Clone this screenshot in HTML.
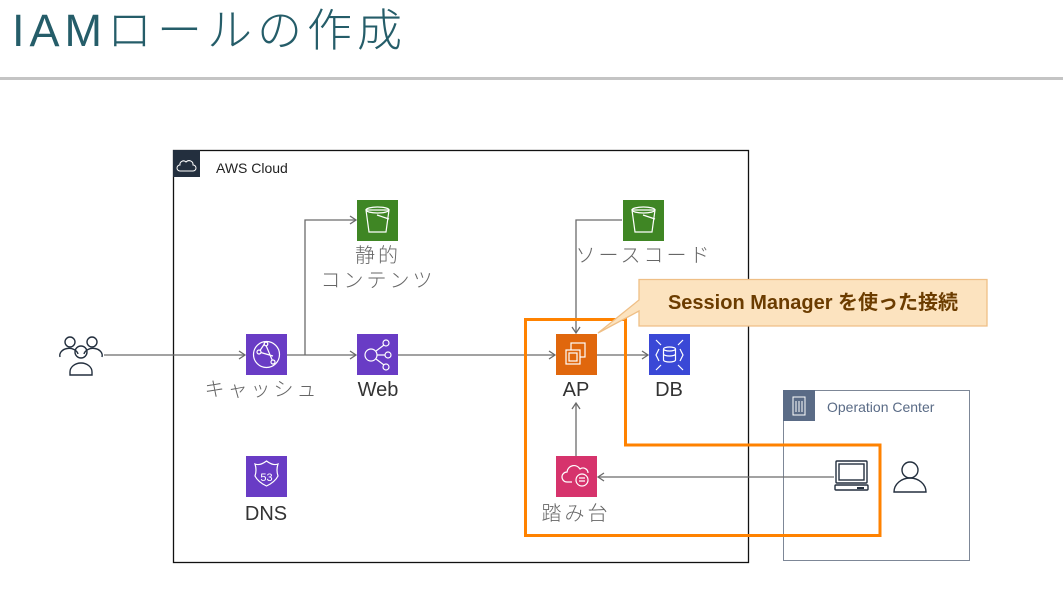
<!DOCTYPE html>
<html><head><meta charset="utf-8"><style>
html,body{margin:0;padding:0;background:#fff;width:1063px;height:589px;overflow:hidden;position:relative;font-family:"Liberation Sans","Noto Sans CJK JP",sans-serif}
.t{position:absolute;white-space:nowrap;color:#333;font-size:20px;transform:translateX(-50%);line-height:1}
.j{color:#666;letter-spacing:3px;font-weight:300}
</style></head><body>
<div style="position:absolute;left:12px;top:6px;font-size:45px;color:#255d69;letter-spacing:5px;line-height:1.1;font-weight:300">IAMロールの作成</div>
<div style="position:absolute;left:0;top:77px;width:1063px;height:3px;background:#c4c4c4"></div>

<svg width="1063" height="589" style="position:absolute;left:0;top:0" xmlns="http://www.w3.org/2000/svg">
<defs><marker id="a" markerWidth="10" markerHeight="10" refX="8" refY="5" orient="auto" markerUnits="userSpaceOnUse"><path d="M2 1L8 5L2 9" fill="none" stroke="#6b6b6b" stroke-width="1.3"/></marker></defs>
<rect x="173.5" y="150.5" width="575" height="412" fill="none" stroke="#111" stroke-width="1.3"/>
<rect x="173" y="150" width="27" height="27" fill="#232f3e"/>
<path d="M180 171h13a3 3 0 0 0 0-6 4 4 0 0 0-7-3 3.5 3.5 0 0 0-6 3 3 3 0 0 0 0 6z" fill="none" stroke="#fff" stroke-width="1"/>
<text x="216" y="173" font-size="14" fill="#222" font-family="Liberation Sans,sans-serif">AWS Cloud</text>
<rect x="783.5" y="390.5" width="186" height="170" fill="none" stroke="#7d8797" stroke-width="1"/>
<rect x="783" y="390" width="32" height="31" fill="#5a6b86"/>
<rect x="793" y="397" width="12" height="18" fill="none" stroke="#fff" stroke-width="1"/>
<path d="M796 401v11M799 401v11M802 401v11" stroke="#fff" stroke-width="1"/>
<text x="827" y="412" font-size="14" fill="#5a6b86" font-family="Liberation Sans,sans-serif">Operation Center</text>
<g stroke="#6b6b6b" stroke-width="1.3" fill="none">
<path d="M104 355H245" marker-end="url(#a)"/>
<path d="M287 355H356" marker-end="url(#a)"/>
<path d="M305 355V220H356" marker-end="url(#a)"/>
<path d="M398 355H555" marker-end="url(#a)"/>
<path d="M597 355H648" marker-end="url(#a)"/>
<path d="M622 220H576V333" marker-end="url(#a)"/>
<path d="M576 456V403" marker-end="url(#a)"/>
<path d="M834 477H598" marker-end="url(#a)"/>
</g>
<path d="M525.5 319.5H625.5V445H880V535.5H525.5Z" fill="none" stroke="#ff8200" stroke-width="3"/>
<path d="M639 279.5H987V326H639V311L598 333L639 300Z" fill="#fce3bf" stroke="#efbf86" stroke-width="1.3"/>
<rect x="357" y="200" width="41" height="41" fill="#3f8624"/>
<rect x="623" y="200" width="41" height="41" fill="#3f8624"/>
<g fill="none" stroke="#fff" stroke-width="1.2">
<path d="M366 210h23l-3 22h-17z"/><ellipse cx="377.5" cy="210" rx="11.5" ry="3"/><path d="M377 215l12 4"/>
<path d="M632 210h23l-3 22h-17z"/><ellipse cx="643.5" cy="210" rx="11.5" ry="3"/><path d="M643 215l12 4"/>
</g>
<rect x="246" y="334" width="41" height="41" fill="#693cc5"/>
<g fill="none" stroke="#fff" stroke-width="1.2"><circle cx="266.5" cy="354.5" r="13"/><path d="M259 352l6-9 8 19M259 352l14 4"/><circle cx="259" cy="352" r="2" fill="#693cc5"/><circle cx="273" cy="362" r="2" fill="#693cc5"/><circle cx="266" cy="344" r="1.8" fill="#693cc5"/></g>
<rect x="357" y="334" width="41" height="41" fill="#693cc5"/>
<g fill="none" stroke="#fff" stroke-width="1.2"><circle cx="371" cy="355" r="6"/><circle cx="386" cy="343" r="3"/><circle cx="388" cy="355" r="3"/><circle cx="386" cy="367" r="3"/><path d="M377 355h8M376 351l8-6M376 359l8 6"/></g>
<rect x="246" y="456" width="41" height="41" fill="#693cc5"/>
<g fill="none" stroke="#fff" stroke-width="1.2"><path d="M255 464q5 2 11.5-3q6.5 5 11.5 3q-2 6 0 12q-3 6-11.5 10q-8.5-4-11.5-10q2-6 0-12z"/><text x="266.5" y="481" font-size="11" fill="#fff" stroke="none" text-anchor="middle" font-family="Liberation Sans,sans-serif">53</text></g>
<rect x="556" y="334" width="41" height="41" fill="#e0670d"/>
<g fill="none" stroke="#fff" stroke-width="1.2"><rect x="571" y="343" width="14" height="14"/><rect x="566" y="350" width="14" height="14" fill="#e0670d"/><rect x="569" y="353" width="8" height="8"/></g>
<rect x="649" y="334" width="41" height="41" fill="#3a48d6"/>
<g fill="none" stroke="#fff" stroke-width="1.2"><ellipse cx="669.5" cy="349" rx="6" ry="2"/><path d="M663.5 349v11a6 2 0 0 0 12 0V349M663.5 354a6 2 0 0 0 12 0"/><path d="M659 349l-3 6 3 6M680 349l3 6-3 6M656 340l5 5M683 340l-5 5M656 370l5-5M683 370l-5-5"/></g>
<rect x="556" y="456" width="41" height="41" fill="#d6336c"/>
<g fill="none" stroke="#fff" stroke-width="1.2"><path d="M572 482h-5a5 5 0 0 1 0-10 7 7 0 0 1 13-3 5 5 0 0 1 8 4"/><circle cx="582" cy="480" r="6"/><path d="M579 478h6M579 481h6"/></g>
<g fill="none" stroke="#232f3e" stroke-width="1.4"><circle cx="70" cy="342" r="5"/><path d="M60 357a9 7 0 0 1 18-3"/><circle cx="92" cy="342" r="5"/><path d="M102 357a9 7 0 0 0-18-3"/><circle cx="81" cy="352" r="6"/><path d="M70 375v-3a11 9 0 0 1 22 0v3z"/></g>
<g fill="none" stroke="#232f3e" stroke-width="1.4"><rect x="836" y="461" width="31" height="22" rx="1"/><rect x="839" y="464" width="25" height="16"/><rect x="835" y="485" width="33" height="5" rx="1"/></g>
<rect x="857" y="487" width="7" height="2" fill="#232f3e"/>
<g fill="none" stroke="#232f3e" stroke-width="1.4"><circle cx="910" cy="470" r="8"/><path d="M894 492a16 14 0 0 1 32 0z"/></g>
</svg>

<div style="position:absolute;left:639px;top:291px;width:348px;text-align:center;font-size:20px;color:#6b3c00;font-weight:bold;line-height:24px">Session Manager を使った接続</div>

<div class="t j" style="left:262px;top:380px">キャッシュ</div>
<div class="t" style="left:378px;top:380px">Web</div>
<div class="t j" style="left:378px;top:246px">静的</div>
<div class="t j" style="left:378px;top:271px">コンテンツ</div>
<div class="t j" style="left:644px;top:246px">ソースコード</div>
<div class="t" style="left:576px;top:380px">AP</div>
<div class="t" style="left:669px;top:380px">DB</div>
<div class="t j" style="left:576px;top:504px">踏み台</div>
<div class="t" style="left:266px;top:504px">DNS</div>
</body></html>
